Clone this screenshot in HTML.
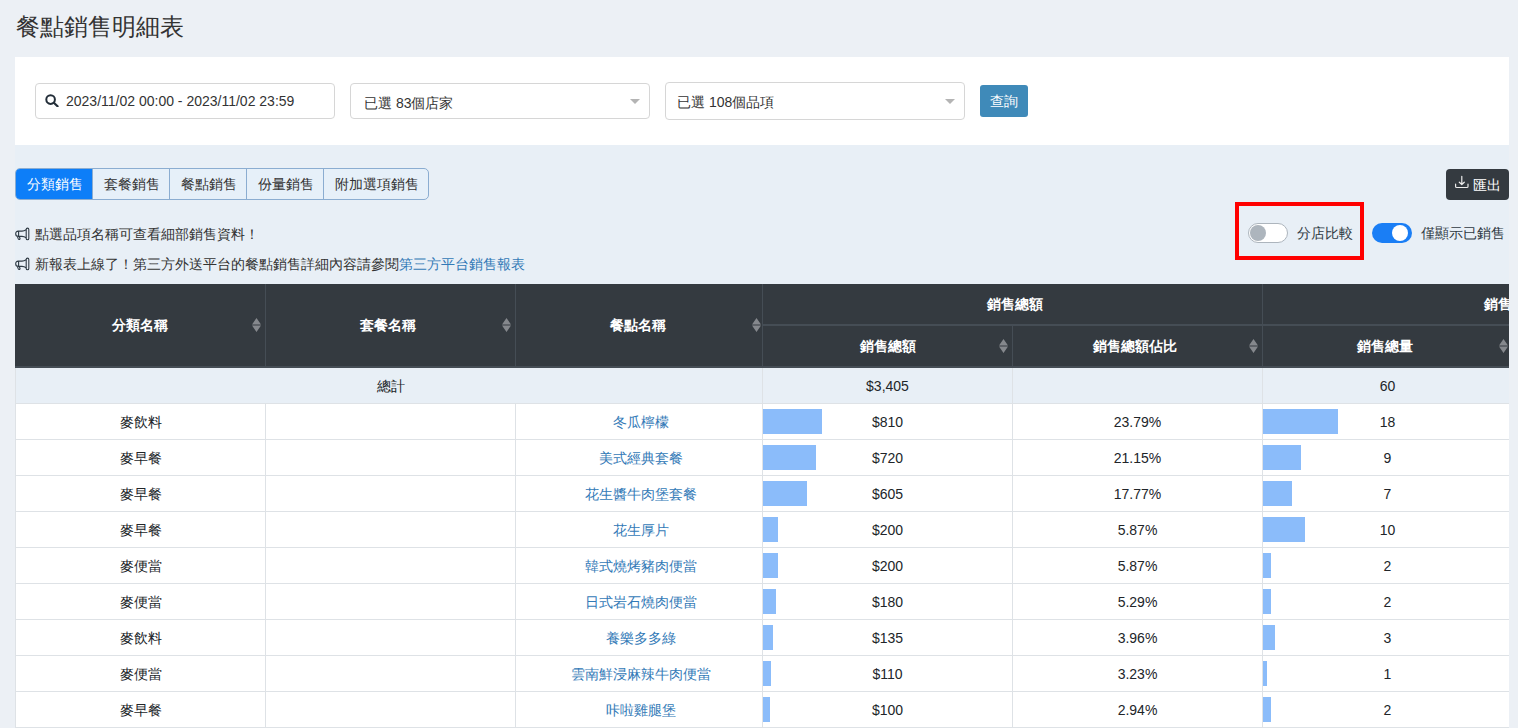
<!DOCTYPE html>
<html><head><meta charset="utf-8">
<style>
*{box-sizing:border-box;margin:0;padding:0}
html,body{width:1518px;height:728px;overflow:hidden}
body{background:#ecf0f5;font-family:"Liberation Sans",sans-serif;color:#212529;font-size:14px;position:relative}
.abs{position:absolute}
.title{left:16px;top:11px;font-size:24px;color:#333;line-height:32px;white-space:nowrap}
.panel{left:15px;top:57px;width:1494px;height:88px;background:#fff}
.inp{border:1px solid #d6d6d6;border-radius:4px;background:#fff}
.txt{font-size:14px;color:#333;line-height:16px;white-space:nowrap}
.arrow{width:0;height:0;border-left:5px solid transparent;border-right:5px solid transparent;border-top:5px solid #b4b4b4}
.btnq{left:980px;top:85px;width:48px;height:32px;background:#3f8ab9;border-radius:3px;color:#fff;font-size:14px;line-height:32px;text-align:center}
.tabs{left:15px;top:168px;height:32px;width:414px;border:1px solid #8badd1;border-radius:5px;background:#e6f0f9;overflow:hidden}
.tab{position:absolute;top:0;height:30px;line-height:30px;text-align:center;font-size:14px;color:#333;border-left:1px solid #8badd1;white-space:nowrap}
.tab.act{background:#0d7ef8;color:#fff;border-left:none}
.export{left:1446px;top:169px;width:63px;height:31px;background:#343a40;border-radius:4px;color:#fff;font-size:14px}
.notice{left:15px;font-size:14px;color:#333;line-height:16px;white-space:nowrap}
.notice a{color:#337ab7;text-decoration:none}
.redbox{left:1235px;top:202px;width:129px;height:58px;border:4px solid #f00}
.sw{width:40px;height:20px;border-radius:10px}
.sw.off{background:#fff;border:1px solid #adb5bd}
.sw.on{background:#1a7ef5}
.knob{position:absolute;width:16px;height:16px;border-radius:50%}
.swlabel{font-size:14px;color:#2f3942;line-height:16px;white-space:nowrap}
.tbl{left:15px;top:284px;width:1494px;height:444px;overflow:hidden}
.th{position:absolute;background:#343a40}
.hl{position:absolute;background:#454d55}
.htxt{position:absolute;color:#fff;font-weight:bold;font-size:14px;line-height:16px;text-align:center;white-space:nowrap}
.sort{position:absolute;width:9px;height:14px;display:block}
.row{position:absolute;left:0;width:1494px;height:36px;border-bottom:1px solid #dee2e6}
.cell{position:absolute;top:0;height:35px;line-height:37px;text-align:center;font-size:14px;color:#212529;white-space:nowrap;border-left:1px solid #dee2e6}
.cell a{color:#337ab7;text-decoration:none}
.bar{position:absolute;left:0;top:5px;height:25px;background:#8bbcfa}
.cell span{position:relative}
i{font-style:normal;display:inline-block;width:1em;text-align:center}
.nocjk i{-webkit-text-fill-color:transparent;position:relative}
.nocjk i:before{content:"";position:absolute;left:.07em;right:.07em;top:50%;height:.84em;margin-top:-.45em;background:currentColor;opacity:0.42}
.nocjk .htxt i:before{opacity:0.72}
.nocjk .title i:before{opacity:.47}
.nocjk i.p:before{left:.4em;right:.4em;opacity:.5}
</style></head><body>
<div class="abs title"><i>餐</i><i>點</i><i>銷</i><i>售</i><i>明</i><i>細</i><i>表</i></div>
<div class="abs panel"></div>
<div class="abs" style="left:15px;top:145px;width:1494px;height:583px;background:#e8eff6"></div>

<!-- date input -->
<div class="abs inp" style="left:35px;top:83px;width:300px;height:36px"></div>
<svg class="abs" style="left:45px;top:94px" width="14" height="13" viewBox="0 0 14 13">
<circle cx="5.6" cy="5.6" r="4.3" fill="none" stroke="#222d38" stroke-width="2"/>
<line x1="8.8" y1="8.8" x2="12.6" y2="12.3" stroke="#222d38" stroke-width="2.2" stroke-linecap="round"/>
</svg>
<div class="abs txt" style="left:66px;top:93px">2023/11/02 00:00 - 2023/11/02 23:59</div>

<!-- store select -->
<div class="abs inp" style="left:350px;top:83px;width:300px;height:36px"></div>
<div class="abs txt" style="left:364px;top:95px;font-size:14px"><i>已</i><i>選</i> 83<i>個</i><i>店</i><i>家</i></div>
<div class="abs arrow" style="left:630px;top:99px"></div>

<!-- item select -->
<div class="abs inp" style="left:665px;top:82px;width:300px;height:38px"></div>
<div class="abs txt" style="left:677px;top:94px;font-size:14px"><i>已</i><i>選</i> 108<i>個</i><i>品</i><i>項</i></div>
<div class="abs arrow" style="left:945px;top:99px"></div>

<div class="abs btnq"><i>查</i><i>詢</i></div>

<!-- tabs -->
<div class="abs tabs">
  <div class="tab act" style="left:0;width:77px"><i>分</i><i>類</i><i>銷</i><i>售</i></div>
  <div class="tab" style="left:76px;width:78px"><i>套</i><i>餐</i><i>銷</i><i>售</i></div>
  <div class="tab" style="left:153px;width:78px"><i>餐</i><i>點</i><i>銷</i><i>售</i></div>
  <div class="tab" style="left:230px;width:78px"><i>份</i><i>量</i><i>銷</i><i>售</i></div>
  <div class="tab" style="left:307px;width:107px"><i>附</i><i>加</i><i>選</i><i>項</i><i>銷</i><i>售</i></div>
</div>

<!-- export -->
<div class="abs export">
  <svg class="abs" style="left:9px;top:6px" width="15" height="14" viewBox="0 0 15 14">
    <path d="M6.8 1.3 V9.4 M4.3 7.2 L6.8 9.5 L9.3 7.2" fill="none" stroke="#ececec" stroke-width="1.2" stroke-linecap="round" stroke-linejoin="round"/>
    <path d="M0.6 9.2 V11.4 Q0.6 12.5 1.8 12.5 H11.8 Q13 12.5 13 11.4 V9.2" fill="none" stroke="#ececec" stroke-width="1.2" stroke-linecap="round"/>
  </svg>
  <div class="abs" style="left:27px;top:8px;line-height:16px"><i>匯</i><i>出</i></div>
</div>

<!-- notices -->
<svg class="abs" style="left:15px;top:227px" width="15" height="14" viewBox="0 0 15 14">
<path d="M11.1 2.8 C9.8 3.7 8.8 4.1 7 4.1 H3.2 C1.6 4.1 0.7 5.2 0.7 6.7 C0.7 8.2 1.6 9.4 3.2 9.4 H7 C8.8 9.4 9.8 9.8 11.1 10.8 M3.6 4.1 V9.4 M2.3 9.3 L3.3 11.9 Q3.7 12.6 4.4 12.4 Q5.2 12.1 4.9 11.3 L4.4 9.5" fill="none" stroke="#2f3a44" stroke-width="1.1" stroke-linejoin="round"/>
<rect x="11.2" y="1.1" width="2.6" height="11.7" rx="1.3" fill="none" stroke="#2f3a44" stroke-width="1.1"/>
</svg>
<div class="abs notice" style="left:35px;top:226px"><i>點</i><i>選</i><i>品</i><i>項</i><i>名</i><i>稱</i><i>可</i><i>查</i><i>看</i><i>細</i><i>部</i><i>銷</i><i>售</i><i>資</i><i>料</i><i class="p">！</i></div>
<svg class="abs" style="left:15px;top:257px" width="15" height="14" viewBox="0 0 15 14">
<path d="M11.1 2.8 C9.8 3.7 8.8 4.1 7 4.1 H3.2 C1.6 4.1 0.7 5.2 0.7 6.7 C0.7 8.2 1.6 9.4 3.2 9.4 H7 C8.8 9.4 9.8 9.8 11.1 10.8 M3.6 4.1 V9.4 M2.3 9.3 L3.3 11.9 Q3.7 12.6 4.4 12.4 Q5.2 12.1 4.9 11.3 L4.4 9.5" fill="none" stroke="#2f3a44" stroke-width="1.1" stroke-linejoin="round"/>
<rect x="11.2" y="1.1" width="2.6" height="11.7" rx="1.3" fill="none" stroke="#2f3a44" stroke-width="1.1"/>
</svg>
<div class="abs notice" style="left:35px;top:256px"><i>新</i><i>報</i><i>表</i><i>上</i><i>線</i><i>了</i><i class="p">！</i><i>第</i><i>三</i><i>方</i><i>外</i><i>送</i><i>平</i><i>台</i><i>的</i><i>餐</i><i>點</i><i>銷</i><i>售</i><i>詳</i><i>細</i><i>內</i><i>容</i><i>請</i><i>參</i><i>閱</i><a><i>第</i><i>三</i><i>方</i><i>平</i><i>台</i><i>銷</i><i>售</i><i>報</i><i>表</i></a></div>

<!-- toggles -->
<div class="abs redbox"></div>
<div class="abs sw off" style="left:1248px;top:223px"><div class="knob" style="left:1px;top:1px;background:#adb5bd"></div></div>
<div class="abs swlabel" style="left:1297px;top:225px"><i>分</i><i>店</i><i>比</i><i>較</i></div>
<div class="abs sw on" style="left:1372px;top:223px"><div class="knob" style="left:20px;top:2px;background:#fff"></div></div>
<div class="abs swlabel" style="left:1421px;top:225px"><i>僅</i><i>顯</i><i>示</i><i>已</i><i>銷</i><i>售</i></div>

<!-- table -->
<div class="abs tbl" id="tbl">
<div class="th" style="left:0;top:0;width:1494px;height:84px"></div>
<div class="hl" style="left:250px;top:0;width:1px;height:84px"></div>
<div class="hl" style="left:500px;top:0;width:1px;height:84px"></div>
<div class="hl" style="left:747px;top:0;width:1px;height:84px"></div>
<div class="hl" style="left:1247px;top:0;width:1px;height:84px"></div>
<div class="hl" style="left:997px;top:42px;width:1px;height:42px"></div>
<div class="hl" style="left:747px;top:40px;width:747px;height:2px"></div>
<div class="hl" style="left:0;top:82px;width:1494px;height:2px"></div>
<div class="htxt" style="left:0px;width:250px;top:33px"><i>分</i><i>類</i><i>名</i><i>稱</i></div>
<svg class="sort" style="left:237px;top:34px" width="9" height="14" viewBox="0 0 9 14"><path d="M0 6.4 L4.5 0 L9 6.4 Z M0 7.6 L4.5 14 L9 7.6 Z" fill="#85888d"/></svg>
<div class="htxt" style="left:248px;width:250px;top:33px"><i>套</i><i>餐</i><i>名</i><i>稱</i></div>
<svg class="sort" style="left:487px;top:34px" width="9" height="14" viewBox="0 0 9 14"><path d="M0 6.4 L4.5 0 L9 6.4 Z M0 7.6 L4.5 14 L9 7.6 Z" fill="#85888d"/></svg>
<div class="htxt" style="left:499px;width:247px;top:33px"><i>餐</i><i>點</i><i>名</i><i>稱</i></div>
<svg class="sort" style="left:737px;top:34px" width="9" height="14" viewBox="0 0 9 14"><path d="M0 6.4 L4.5 0 L9 6.4 Z M0 7.6 L4.5 14 L9 7.6 Z" fill="#85888d"/></svg>
<div class="htxt" style="left:750px;width:500px;top:12px"><i>銷</i><i>售</i><i>總</i><i>額</i></div>
<div class="htxt" style="left:1247px;width:500px;top:12px"><i>銷</i><i>售</i><i>總</i><i>量</i></div>
<div class="htxt" style="left:748px;width:250px;top:54px"><i>銷</i><i>售</i><i>總</i><i>額</i></div>
<svg class="sort" style="left:984px;top:55px" width="9" height="14" viewBox="0 0 9 14"><path d="M0 6.4 L4.5 0 L9 6.4 Z M0 7.6 L4.5 14 L9 7.6 Z" fill="#85888d"/></svg>
<div class="htxt" style="left:995px;width:250px;top:54px"><i>銷</i><i>售</i><i>總</i><i>額</i><i>佔</i><i>比</i></div>
<svg class="sort" style="left:1234px;top:55px" width="9" height="14" viewBox="0 0 9 14"><path d="M0 6.4 L4.5 0 L9 6.4 Z M0 7.6 L4.5 14 L9 7.6 Z" fill="#85888d"/></svg>
<div class="htxt" style="left:1245px;width:250px;top:54px"><i>銷</i><i>售</i><i>總</i><i>量</i></div>
<svg class="sort" style="left:1484px;top:55px" width="9" height="14" viewBox="0 0 9 14"><path d="M0 6.4 L4.5 0 L9 6.4 Z M0 7.6 L4.5 14 L9 7.6 Z" fill="#85888d"/></svg>
<div class="row" style="top:84px;height:36px;background:#e8eff6">
<div class="cell" style="left:0;width:747px;padding-left:4px"><i>總</i><i>計</i></div>
<div class="cell" style="left:747px;width:250px">$3,405</div>
<div class="cell" style="left:997px;width:250px"></div>
<div class="cell" style="left:1247px;width:250px">60</div>
</div>
<div class="row" style="top:120px;background:#fff">
<div class="cell" style="left:0;width:250px"><i>麥</i><i>飲</i><i>料</i></div>
<div class="cell" style="left:250px;width:250px"></div>
<div class="cell" style="left:500px;width:247px;padding-left:4px"><a><i>冬</i><i>瓜</i><i>檸</i><i>檬</i></a></div>
<div class="cell" style="left:747px;width:250px"><div class="bar" style="width:59px"></div><span>$810</span></div>
<div class="cell" style="left:997px;width:250px">23.79%</div>
<div class="cell" style="left:1247px;width:250px"><div class="bar" style="width:75px"></div><span>18</span></div>
<div class="cell" style="left:1497px;width:250px"></div>
</div>
<div class="row" style="top:156px;background:#fff">
<div class="cell" style="left:0;width:250px"><i>麥</i><i>早</i><i>餐</i></div>
<div class="cell" style="left:250px;width:250px"></div>
<div class="cell" style="left:500px;width:247px;padding-left:4px"><a><i>美</i><i>式</i><i>經</i><i>典</i><i>套</i><i>餐</i></a></div>
<div class="cell" style="left:747px;width:250px"><div class="bar" style="width:53px"></div><span>$720</span></div>
<div class="cell" style="left:997px;width:250px">21.15%</div>
<div class="cell" style="left:1247px;width:250px"><div class="bar" style="width:38px"></div><span>9</span></div>
<div class="cell" style="left:1497px;width:250px"></div>
</div>
<div class="row" style="top:192px;background:#fff">
<div class="cell" style="left:0;width:250px"><i>麥</i><i>早</i><i>餐</i></div>
<div class="cell" style="left:250px;width:250px"></div>
<div class="cell" style="left:500px;width:247px;padding-left:4px"><a><i>花</i><i>生</i><i>醬</i><i>牛</i><i>肉</i><i>堡</i><i>套</i><i>餐</i></a></div>
<div class="cell" style="left:747px;width:250px"><div class="bar" style="width:44px"></div><span>$605</span></div>
<div class="cell" style="left:997px;width:250px">17.77%</div>
<div class="cell" style="left:1247px;width:250px"><div class="bar" style="width:29px"></div><span>7</span></div>
<div class="cell" style="left:1497px;width:250px"></div>
</div>
<div class="row" style="top:228px;background:#fff">
<div class="cell" style="left:0;width:250px"><i>麥</i><i>早</i><i>餐</i></div>
<div class="cell" style="left:250px;width:250px"></div>
<div class="cell" style="left:500px;width:247px;padding-left:4px"><a><i>花</i><i>生</i><i>厚</i><i>片</i></a></div>
<div class="cell" style="left:747px;width:250px"><div class="bar" style="width:15px"></div><span>$200</span></div>
<div class="cell" style="left:997px;width:250px">5.87%</div>
<div class="cell" style="left:1247px;width:250px"><div class="bar" style="width:42px"></div><span>10</span></div>
<div class="cell" style="left:1497px;width:250px"></div>
</div>
<div class="row" style="top:264px;background:#fff">
<div class="cell" style="left:0;width:250px"><i>麥</i><i>便</i><i>當</i></div>
<div class="cell" style="left:250px;width:250px"></div>
<div class="cell" style="left:500px;width:247px;padding-left:4px"><a><i>韓</i><i>式</i><i>燒</i><i>烤</i><i>豬</i><i>肉</i><i>便</i><i>當</i></a></div>
<div class="cell" style="left:747px;width:250px"><div class="bar" style="width:15px"></div><span>$200</span></div>
<div class="cell" style="left:997px;width:250px">5.87%</div>
<div class="cell" style="left:1247px;width:250px"><div class="bar" style="width:8px"></div><span>2</span></div>
<div class="cell" style="left:1497px;width:250px"></div>
</div>
<div class="row" style="top:300px;background:#fff">
<div class="cell" style="left:0;width:250px"><i>麥</i><i>便</i><i>當</i></div>
<div class="cell" style="left:250px;width:250px"></div>
<div class="cell" style="left:500px;width:247px;padding-left:4px"><a><i>日</i><i>式</i><i>岩</i><i>石</i><i>燒</i><i>肉</i><i>便</i><i>當</i></a></div>
<div class="cell" style="left:747px;width:250px"><div class="bar" style="width:13px"></div><span>$180</span></div>
<div class="cell" style="left:997px;width:250px">5.29%</div>
<div class="cell" style="left:1247px;width:250px"><div class="bar" style="width:8px"></div><span>2</span></div>
<div class="cell" style="left:1497px;width:250px"></div>
</div>
<div class="row" style="top:336px;background:#fff">
<div class="cell" style="left:0;width:250px"><i>麥</i><i>飲</i><i>料</i></div>
<div class="cell" style="left:250px;width:250px"></div>
<div class="cell" style="left:500px;width:247px;padding-left:4px"><a><i>養</i><i>樂</i><i>多</i><i>多</i><i>綠</i></a></div>
<div class="cell" style="left:747px;width:250px"><div class="bar" style="width:10px"></div><span>$135</span></div>
<div class="cell" style="left:997px;width:250px">3.96%</div>
<div class="cell" style="left:1247px;width:250px"><div class="bar" style="width:12px"></div><span>3</span></div>
<div class="cell" style="left:1497px;width:250px"></div>
</div>
<div class="row" style="top:372px;background:#fff">
<div class="cell" style="left:0;width:250px"><i>麥</i><i>便</i><i>當</i></div>
<div class="cell" style="left:250px;width:250px"></div>
<div class="cell" style="left:500px;width:247px;padding-left:4px"><a><i>雲</i><i>南</i><i>鮮</i><i>浸</i><i>麻</i><i>辣</i><i>牛</i><i>肉</i><i>便</i><i>當</i></a></div>
<div class="cell" style="left:747px;width:250px"><div class="bar" style="width:8px"></div><span>$110</span></div>
<div class="cell" style="left:997px;width:250px">3.23%</div>
<div class="cell" style="left:1247px;width:250px"><div class="bar" style="width:4px"></div><span>1</span></div>
<div class="cell" style="left:1497px;width:250px"></div>
</div>
<div class="row" style="top:408px;background:#fff">
<div class="cell" style="left:0;width:250px"><i>麥</i><i>早</i><i>餐</i></div>
<div class="cell" style="left:250px;width:250px"></div>
<div class="cell" style="left:500px;width:247px;padding-left:4px"><a><i>咔</i><i>啦</i><i>雞</i><i>腿</i><i>堡</i></a></div>
<div class="cell" style="left:747px;width:250px"><div class="bar" style="width:7px"></div><span>$100</span></div>
<div class="cell" style="left:997px;width:250px">2.94%</div>
<div class="cell" style="left:1247px;width:250px"><div class="bar" style="width:8px"></div><span>2</span></div>
<div class="cell" style="left:1497px;width:250px"></div>
</div>
<div class="row" style="top:444px;background:#fff">
<div class="cell" style="left:0;width:250px"><i>麥</i><i>早</i><i>餐</i></div>
<div class="cell" style="left:250px;width:250px"></div>
<div class="cell" style="left:500px;width:247px;padding-left:4px"><a></a></div>
<div class="cell" style="left:747px;width:250px"><div class="bar" style="width:7px"></div><span>$100</span></div>
<div class="cell" style="left:997px;width:250px">2.94%</div>
<div class="cell" style="left:1247px;width:250px"><div class="bar" style="width:8px"></div><span>2</span></div>
<div class="cell" style="left:1497px;width:250px"></div>
</div>
</div>
<script>
(function(){var t=document.createElement("span");t.style.cssText="position:absolute;left:-9999px;top:0;font-size:100px;white-space:nowrap;font-family:'Liberation Sans',sans-serif";t.textContent="\u92b7\u552e";document.body.appendChild(t);var w=t.getBoundingClientRect().width;document.body.removeChild(t);if(w<170){document.documentElement.className+=" nocjk";}})();
</script>
</body></html>
